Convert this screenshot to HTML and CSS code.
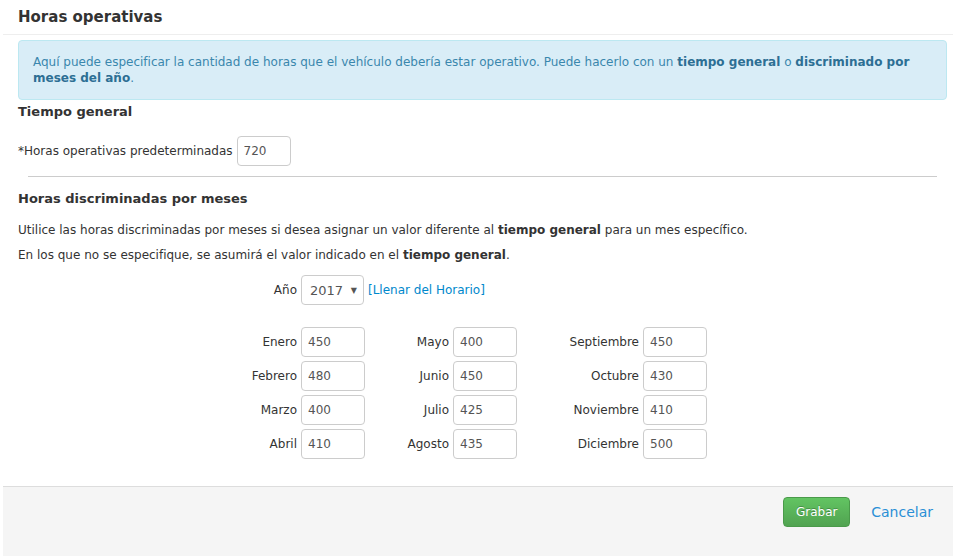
FILE: index.html
```html
<!DOCTYPE html>
<html lang="es">
<head>
  <meta charset="UTF-8">
  <title>Horas operativas</title>
  <link rel="stylesheet" href="styles.css">
</head>
<body>
  <div class="modal">
    <div class="modal-header">
      <h3>Horas operativas</h3>
    </div>

    <div class="modal-body">
      <div class="alert-info">
        Aquí puede especificar la cantidad de horas que el vehículo debería estar operativo. Puede hacerlo con un <b>tiempo general</b> o <b>discriminado por meses del año</b>.
      </div>

      <h4>Tiempo general</h4>
      <div class="field-row">
        <label for="defaultHours">*Horas operativas predeterminadas</label>
        <input type="text" id="defaultHours" class="input-small" value="720">
      </div>

      <hr>

      <h4>Horas discriminadas por meses</h4>
      <p>Utilice las horas discriminadas por meses si desea asignar un valor diferente al <b>tiempo general</b> para un mes específico.</p>
      <p>En los que no se especifique, se asumirá el valor indicado en el <b>tiempo general</b>.</p>

      <div class="year-row">
        <label for="year">Año</label>
        <div class="select-box" id="year">
          <span>2017</span>
          <span class="caret">&#9660;</span>
        </div>
        <a href="#" class="fill-link">[Llenar del Horario]</a>
      </div>

      <div class="months">
        <label>Enero</label><input type="text" value="450">
        <label>Mayo</label><input type="text" value="400">
        <label>Septiembre</label><input type="text" value="450">

        <label>Febrero</label><input type="text" value="480">
        <label>Junio</label><input type="text" value="450">
        <label>Octubre</label><input type="text" value="430">

        <label>Marzo</label><input type="text" value="400">
        <label>Julio</label><input type="text" value="425">
        <label>Noviembre</label><input type="text" value="410">

        <label>Abril</label><input type="text" value="410">
        <label>Agosto</label><input type="text" value="435">
        <label>Diciembre</label><input type="text" value="500">
      </div>
    </div>

    <div class="modal-footer">
      <button type="button" class="btn-success">Grabar</button>
      <a href="#" class="btn-link">Cancelar</a>
    </div>
  </div>
</body>
</html>
```

FILE: styles.css
```css
html, body {
  margin: 0;
  padding: 0;
  height: 100%;
}
body {
  font-family: "DejaVu Sans", Verdana, sans-serif;
  font-size: 12px;
  color: #333;
  background: #fff;
}
.modal {
  margin-left: 3px;
  min-height: 100%;
  display: flex;
  flex-direction: column;
}
.modal-header {
  padding: 0 15px;
  height: 34px;
  border-bottom: 1px solid #eee;
}
.modal-header h3 {
  margin: 0;
  font-size: 15px;
  line-height: 35px;
  font-weight: bold;
  color: #333;
}
.modal-body {
  padding: 5px 6px 27px 15px;
}
.alert-info {
  background: #d9edf7;
  border: 1px solid #bce8f1;
  border-radius: 4px;
  color: #3a87ad;
  padding: 13px 14px;
  line-height: 16px;
}
.alert-info b {
  color: #2d6f94;
}
h4 {
  margin: 4px 0 0;
  font-size: 13px;
  line-height: 16px;
  font-weight: bold;
}
.field-row {
  display: flex;
  align-items: center;
  gap: 4px;
  margin-top: 16px;
}
input {
  font-family: inherit;
  font-size: 12px;
  color: #555;
  height: 30px;
  box-sizing: border-box;
  border: 1px solid #ccc;
  border-radius: 4px;
  padding: 0 6px;
  margin: 0;
  background: #fff;
}
.input-small {
  width: 54px;
}
hr {
  border: 0;
  border-top: 1px solid #ccc;
  margin: 10px 10px 0;
}
hr + h4 {
  margin-top: 14px;
}
p {
  margin: 15px 0 9px;
  line-height: 16px;
}
p + p {
  margin-top: 0;
}
.year-row {
  display: flex;
  align-items: center;
  gap: 4px;
  margin-top: 12px;
  padding-left: 199px;
}
.year-row label {
  width: 80px;
  text-align: right;
}
.select-box {
  width: 63px;
  height: 30px;
  box-sizing: border-box;
  border: 1px solid #ccc;
  border-radius: 4px;
  display: flex;
  align-items: center;
  justify-content: space-between;
  padding: 0 6px 0 8px;
  font-size: 13px;
  color: #555;
}
.caret {
  font-size: 8px;
  color: #555;
}
.fill-link {
  color: #0088cc;
  text-decoration: none;
}
.months {
  display: grid;
  grid-template-columns: 80px 64px 80px 64px 118px 64px;
  grid-auto-rows: 30px;
  gap: 4px;
  margin: 22px 0 0 199px;
}
.months label {
  text-align: right;
  align-self: center;
}
.modal-footer {
  flex: 1;
  background: #f5f5f5;
  border-top: 1px solid #ddd;
  padding: 10px 20px 20px;
  display: flex;
  justify-content: flex-end;
  align-items: flex-start;
}
.btn-success {
  font-family: inherit;
  font-size: 12px;
  color: #fff;
  width: 67px;
  height: 30px;
  border: 1px solid #4a9a4a;
  border-radius: 4px;
  background: linear-gradient(#62c462, #51a351);
  text-shadow: 0 -1px 0 rgba(0, 0, 0, 0.25);
  cursor: pointer;
}
.btn-link {
  margin-left: 21px;
  color: #2a8fd6;
  text-decoration: none;
  font-size: 14px;
  line-height: 30px;
}
```
